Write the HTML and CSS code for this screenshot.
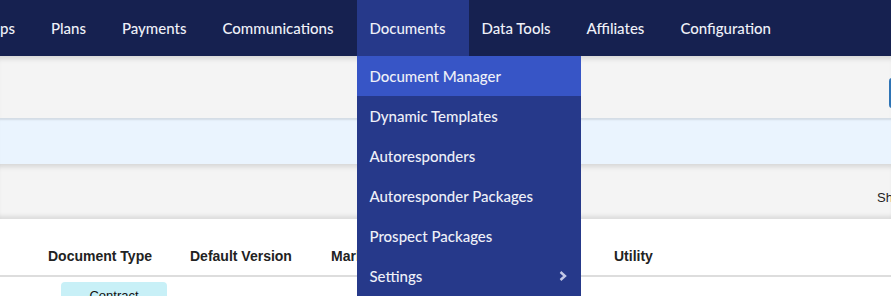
FILE: index.html
```html
<!DOCTYPE html>
<html>
<head>
<meta charset="utf-8">
<link rel="stylesheet" href="styles.css">
</head>
<body>
<nav class="topnav">
  <ul class="nav-list">
    <li class="nav-item first">Groups</li>
    <li class="nav-item">Plans</li>
    <li class="nav-item">Payments</li>
    <li class="nav-item">Communications</li>
    <li class="nav-item active">Documents
      <ul class="dropdown">
        <li class="dd-item hover">Document Manager</li>
        <li class="dd-item">Dynamic Templates</li>
        <li class="dd-item">Autoresponders</li>
        <li class="dd-item">Autoresponder Packages</li>
        <li class="dd-item">Prospect Packages</li>
        <li class="dd-item sub">Settings
          <svg class="chev" width="8" height="10" viewBox="0 0 8 10"><path d="M1.5 1 L6 5 L1.5 9" fill="none" stroke="#c3c9e6" stroke-width="2.4"/></svg>
        </li>
      </ul>
    </li>
    <li class="nav-item">Data Tools</li>
    <li class="nav-item">Affiliates</li>
    <li class="nav-item">Configuration</li>
  </ul>
</nav>
<section class="toolbar">
  <div class="toolbar-btn"></div>
</section>
<section class="notice"></section>
<section class="filters">
  <span class="show">Show</span>
</section>
<section class="table">
  <div class="thead">
    <div class="th"></div>
    <div class="th">Document Type</div>
    <div class="th">Default Version</div>
    <div class="th">Market Type</div>
    <div class="th">Category</div>
    <div class="th">Utility</div>
  </div>
  <div class="trow">
    <div class="td"></div>
    <div class="td"><span class="badge">Contract</span></div>
  </div>
</section>
</body>
</html>
```
FILE: styles.css
```css
* { box-sizing: border-box; }
html, body { margin: 0; padding: 0; }
body {
  width: 891px;
  height: 296px;
  overflow: hidden;
  background: #fff;
  font-family: "Liberation Sans", Arial, sans-serif;
}
.topnav {
  height: 56px;
  background: #162150;
  position: relative;
  z-index: 5;
}
.nav-list {
  list-style: none;
  margin: 0 0 0 -37px;
  padding: 0;
  display: flex;
  height: 56px;
  white-space: nowrap;
}
.nav-item {
  position: relative;
  padding: 0 24px 0 12px;
  height: 56px;
  line-height: 56px;
  color: #eef0f8;
  font-family: Lato, "Open Sans", sans-serif;
  font-size: 15px;
  font-weight: 500;
}
.nav-item.first { margin-left: -8px; }
.nav-item.active { background: #26398a; }
.dropdown {
  list-style: none;
  margin: 0;
  padding: 0;
  position: absolute;
  top: 56px;
  left: 0;
  width: 224px;
  background: #26398a;
}
.dd-item {
  height: 40px;
  line-height: 40px;
  padding: 0 12px;
  color: #eef0f8;
  font-size: 15px;
  display: flex;
  align-items: center;
  justify-content: space-between;
}
.dd-item.hover { background: #3755c6; }
.chev { margin-right: 2px; }
.toolbar {
  height: 62px;
  background: #f4f4f4;
  box-shadow: inset 0 6px 5px -3px rgba(0,0,0,0.12);
  position: relative;
}
.toolbar-btn {
  position: absolute;
  left: 889px;
  top: 22px;
  width: 40px;
  height: 30px;
  background: #2f74b5;
  border-radius: 3px;
}
.notice {
  height: 46px;
  background: #eaf4fe;
  box-shadow: inset 0 3px 2px -1px rgba(0,0,0,0.1);
}
.filters {
  height: 55px;
  background: #f4f4f4;
  box-shadow: inset 0 6px 5px -3px rgba(0,0,0,0.12), inset 0 -6px 4px -3px rgba(0,0,0,0.1);
  position: relative;
}
.show {
  position: absolute;
  left: 877px;
  top: 26px;
  font-size: 13px;
  color: #222;
}
.table { background: #fff; }
.thead {
  display: grid;
  grid-template-columns: 48px 142px 141px 141px 142px 200px;
  height: 58px;
  border-bottom: 2px solid #dddddd;
  align-items: end;
}
.th {
  font-weight: bold;
  font-size: 14px;
  color: #222;
  padding-bottom: 11px;
  white-space: nowrap;
}
.trow {
  display: grid;
  grid-template-columns: 61px 106px;
  padding-top: 5px;
}
.badge {
  display: block;
  height: 24px;
  background: #c8f0f7;
  border-radius: 4px;
  text-align: center;
  font-size: 13px;
  color: #111;
  padding-top: 6px;
}
```
